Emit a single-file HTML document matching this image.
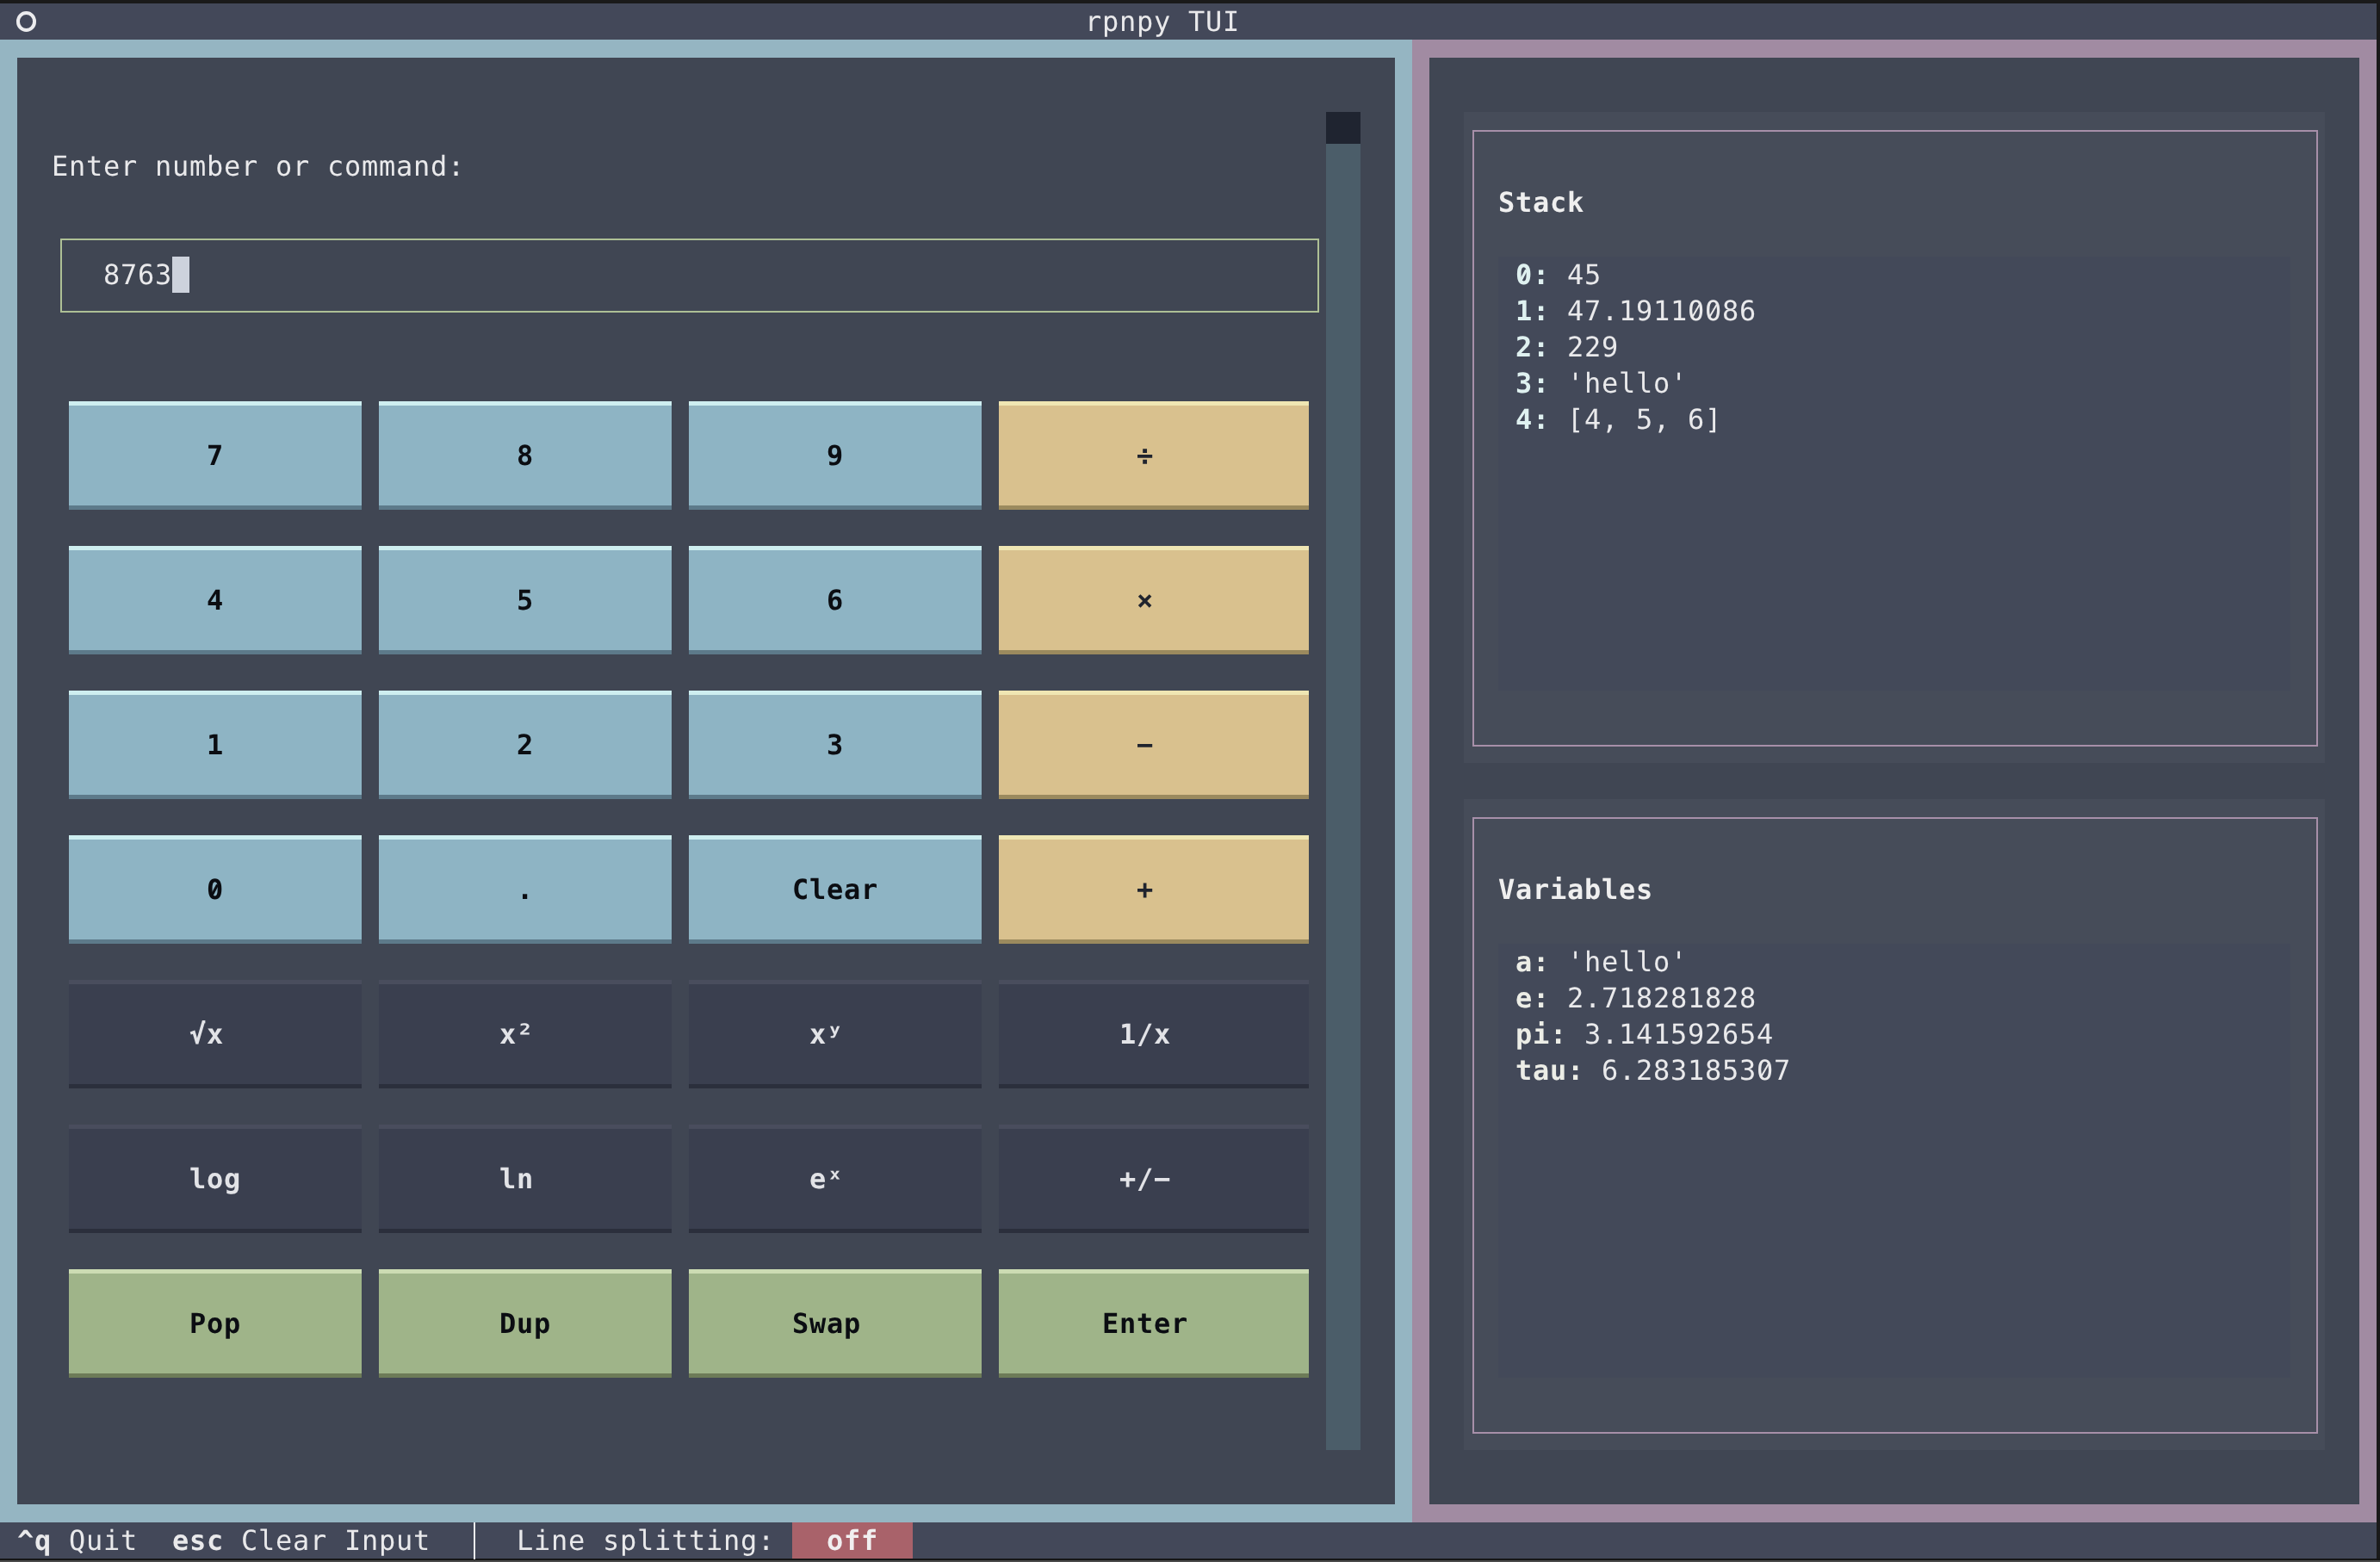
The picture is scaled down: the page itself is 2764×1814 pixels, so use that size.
<!DOCTYPE html>
<html><head><meta charset="utf-8"><title>rpnpy TUI</title>
<style>
html,body{margin:0;padding:0;background:#1a1a1a;}
body{position:relative;width:2764px;height:1814px;overflow:hidden;font-family:"DejaVu Sans Mono","Liberation Mono",monospace;font-size:32px;letter-spacing:0.734375px;line-height:42px;color:#e9e9eb;}
.b{position:absolute;}
#txt{position:absolute;left:0;top:0;width:2764px;height:1814px;will-change:transform;}
.t{position:absolute;transform:skewX(0.03deg);white-space:pre;height:42px;line-height:42px;}
.bd{font-weight:bold;}
</style></head><body>
<div class="b" style="left:0px;top:4px;width:2760px;height:42px;background:#434859;"></div>
<div class="b" style="left:18.9px;top:13px;width:23.05px;height:23.8px;border:solid #ececee;border-width:4.5px 4px;border-radius:50%;box-sizing:border-box"></div>
<div class="b" style="left:0px;top:46px;width:1640px;height:1722px;background:#95b5c2;"></div>
<div class="b" style="left:20px;top:67px;width:1600px;height:1680px;background:#404653;"></div>
<div class="b" style="left:1640px;top:46px;width:1120px;height:1722px;background:#a18ba2;"></div>
<div class="b" style="left:1660px;top:67px;width:1080px;height:1680px;background:#404653;"></div>
<div class="b" style="left:70px;top:277px;width:1462px;height:2px;background:#aec095;"></div>
<div class="b" style="left:70px;top:361px;width:1462px;height:2px;background:#aec095;"></div>
<div class="b" style="left:70px;top:277px;width:2px;height:86px;background:#aec095;"></div>
<div class="b" style="left:1530px;top:277px;width:2px;height:86px;background:#aec095;"></div>
<div class="b" style="left:200px;top:298px;width:20px;height:42px;background:#cdd2dc;"></div>
<div class="b" style="left:1540px;top:130px;width:40px;height:1554px;background:#4b5d69;"></div>
<div class="b" style="left:1540px;top:130px;width:40px;height:36.75px;background:#1f2430;"></div>
<div class="b" style="left:80px;top:466px;width:340px;height:126px;background:#8eb4c4;"></div>
<div class="b" style="left:80px;top:466px;width:340px;height:5px;background:#ceeef0;"></div>
<div class="b" style="left:80px;top:587px;width:340px;height:5px;background:#5d7a8a;"></div>
<div class="b" style="left:440px;top:466px;width:340px;height:126px;background:#8eb4c4;"></div>
<div class="b" style="left:440px;top:466px;width:340px;height:5px;background:#ceeef0;"></div>
<div class="b" style="left:440px;top:587px;width:340px;height:5px;background:#5d7a8a;"></div>
<div class="b" style="left:800px;top:466px;width:340px;height:126px;background:#8eb4c4;"></div>
<div class="b" style="left:800px;top:466px;width:340px;height:5px;background:#ceeef0;"></div>
<div class="b" style="left:800px;top:587px;width:340px;height:5px;background:#5d7a8a;"></div>
<div class="b" style="left:1160px;top:466px;width:360px;height:126px;background:#d9c18e;"></div>
<div class="b" style="left:1160px;top:466px;width:360px;height:5px;background:#efe6b3;"></div>
<div class="b" style="left:1160px;top:587px;width:360px;height:5px;background:#9b8a5e;"></div>
<div class="b" style="left:80px;top:634px;width:340px;height:126px;background:#8eb4c4;"></div>
<div class="b" style="left:80px;top:634px;width:340px;height:5px;background:#ceeef0;"></div>
<div class="b" style="left:80px;top:755px;width:340px;height:5px;background:#5d7a8a;"></div>
<div class="b" style="left:440px;top:634px;width:340px;height:126px;background:#8eb4c4;"></div>
<div class="b" style="left:440px;top:634px;width:340px;height:5px;background:#ceeef0;"></div>
<div class="b" style="left:440px;top:755px;width:340px;height:5px;background:#5d7a8a;"></div>
<div class="b" style="left:800px;top:634px;width:340px;height:126px;background:#8eb4c4;"></div>
<div class="b" style="left:800px;top:634px;width:340px;height:5px;background:#ceeef0;"></div>
<div class="b" style="left:800px;top:755px;width:340px;height:5px;background:#5d7a8a;"></div>
<div class="b" style="left:1160px;top:634px;width:360px;height:126px;background:#d9c18e;"></div>
<div class="b" style="left:1160px;top:634px;width:360px;height:5px;background:#efe6b3;"></div>
<div class="b" style="left:1160px;top:755px;width:360px;height:5px;background:#9b8a5e;"></div>
<div class="b" style="left:80px;top:802px;width:340px;height:126px;background:#8eb4c4;"></div>
<div class="b" style="left:80px;top:802px;width:340px;height:5px;background:#ceeef0;"></div>
<div class="b" style="left:80px;top:923px;width:340px;height:5px;background:#5d7a8a;"></div>
<div class="b" style="left:440px;top:802px;width:340px;height:126px;background:#8eb4c4;"></div>
<div class="b" style="left:440px;top:802px;width:340px;height:5px;background:#ceeef0;"></div>
<div class="b" style="left:440px;top:923px;width:340px;height:5px;background:#5d7a8a;"></div>
<div class="b" style="left:800px;top:802px;width:340px;height:126px;background:#8eb4c4;"></div>
<div class="b" style="left:800px;top:802px;width:340px;height:5px;background:#ceeef0;"></div>
<div class="b" style="left:800px;top:923px;width:340px;height:5px;background:#5d7a8a;"></div>
<div class="b" style="left:1160px;top:802px;width:360px;height:126px;background:#d9c18e;"></div>
<div class="b" style="left:1160px;top:802px;width:360px;height:5px;background:#efe6b3;"></div>
<div class="b" style="left:1160px;top:923px;width:360px;height:5px;background:#9b8a5e;"></div>
<div class="b" style="left:80px;top:970px;width:340px;height:126px;background:#8eb4c4;"></div>
<div class="b" style="left:80px;top:970px;width:340px;height:5px;background:#ceeef0;"></div>
<div class="b" style="left:80px;top:1091px;width:340px;height:5px;background:#5d7a8a;"></div>
<div class="b" style="left:440px;top:970px;width:340px;height:126px;background:#8eb4c4;"></div>
<div class="b" style="left:440px;top:970px;width:340px;height:5px;background:#ceeef0;"></div>
<div class="b" style="left:440px;top:1091px;width:340px;height:5px;background:#5d7a8a;"></div>
<div class="b" style="left:800px;top:970px;width:340px;height:126px;background:#8eb4c4;"></div>
<div class="b" style="left:800px;top:970px;width:340px;height:5px;background:#ceeef0;"></div>
<div class="b" style="left:800px;top:1091px;width:340px;height:5px;background:#5d7a8a;"></div>
<div class="b" style="left:1160px;top:970px;width:360px;height:126px;background:#d9c18e;"></div>
<div class="b" style="left:1160px;top:970px;width:360px;height:5px;background:#efe6b3;"></div>
<div class="b" style="left:1160px;top:1091px;width:360px;height:5px;background:#9b8a5e;"></div>
<div class="b" style="left:80px;top:1138px;width:340px;height:126px;background:#3a3f4f;"></div>
<div class="b" style="left:80px;top:1138px;width:340px;height:5px;background:#494d5d;"></div>
<div class="b" style="left:80px;top:1259px;width:340px;height:5px;background:#2b2f3c;"></div>
<div class="b" style="left:440px;top:1138px;width:340px;height:126px;background:#3a3f4f;"></div>
<div class="b" style="left:440px;top:1138px;width:340px;height:5px;background:#494d5d;"></div>
<div class="b" style="left:440px;top:1259px;width:340px;height:5px;background:#2b2f3c;"></div>
<div class="b" style="left:800px;top:1138px;width:340px;height:126px;background:#3a3f4f;"></div>
<div class="b" style="left:800px;top:1138px;width:340px;height:5px;background:#494d5d;"></div>
<div class="b" style="left:800px;top:1259px;width:340px;height:5px;background:#2b2f3c;"></div>
<div class="b" style="left:1160px;top:1138px;width:360px;height:126px;background:#3a3f4f;"></div>
<div class="b" style="left:1160px;top:1138px;width:360px;height:5px;background:#494d5d;"></div>
<div class="b" style="left:1160px;top:1259px;width:360px;height:5px;background:#2b2f3c;"></div>
<div class="b" style="left:80px;top:1306px;width:340px;height:126px;background:#3a3f4f;"></div>
<div class="b" style="left:80px;top:1306px;width:340px;height:5px;background:#494d5d;"></div>
<div class="b" style="left:80px;top:1427px;width:340px;height:5px;background:#2b2f3c;"></div>
<div class="b" style="left:440px;top:1306px;width:340px;height:126px;background:#3a3f4f;"></div>
<div class="b" style="left:440px;top:1306px;width:340px;height:5px;background:#494d5d;"></div>
<div class="b" style="left:440px;top:1427px;width:340px;height:5px;background:#2b2f3c;"></div>
<div class="b" style="left:800px;top:1306px;width:340px;height:126px;background:#3a3f4f;"></div>
<div class="b" style="left:800px;top:1306px;width:340px;height:5px;background:#494d5d;"></div>
<div class="b" style="left:800px;top:1427px;width:340px;height:5px;background:#2b2f3c;"></div>
<div class="b" style="left:1160px;top:1306px;width:360px;height:126px;background:#3a3f4f;"></div>
<div class="b" style="left:1160px;top:1306px;width:360px;height:5px;background:#494d5d;"></div>
<div class="b" style="left:1160px;top:1427px;width:360px;height:5px;background:#2b2f3c;"></div>
<div class="b" style="left:80px;top:1474px;width:340px;height:126px;background:#9fb489;"></div>
<div class="b" style="left:80px;top:1474px;width:340px;height:5px;background:#ccdcb3;"></div>
<div class="b" style="left:80px;top:1595px;width:340px;height:5px;background:#6d7b58;"></div>
<div class="b" style="left:440px;top:1474px;width:340px;height:126px;background:#9fb489;"></div>
<div class="b" style="left:440px;top:1474px;width:340px;height:5px;background:#ccdcb3;"></div>
<div class="b" style="left:440px;top:1595px;width:340px;height:5px;background:#6d7b58;"></div>
<div class="b" style="left:800px;top:1474px;width:340px;height:126px;background:#9fb489;"></div>
<div class="b" style="left:800px;top:1474px;width:340px;height:5px;background:#ccdcb3;"></div>
<div class="b" style="left:800px;top:1595px;width:340px;height:5px;background:#6d7b58;"></div>
<div class="b" style="left:1160px;top:1474px;width:360px;height:126px;background:#9fb489;"></div>
<div class="b" style="left:1160px;top:1474px;width:360px;height:5px;background:#ccdcb3;"></div>
<div class="b" style="left:1160px;top:1595px;width:360px;height:5px;background:#6d7b58;"></div>
<div class="b" style="left:1700px;top:130px;width:1000px;height:756px;background:#464c59;"></div>
<div class="b" style="left:1710px;top:151px;width:982px;height:2px;background:#a78fa9;"></div>
<div class="b" style="left:1710px;top:865px;width:982px;height:2px;background:#a78fa9;"></div>
<div class="b" style="left:1710px;top:151px;width:2px;height:716px;background:#a78fa9;"></div>
<div class="b" style="left:2690px;top:151px;width:2px;height:716px;background:#a78fa9;"></div>
<div class="b" style="left:1740px;top:298px;width:920px;height:504px;background:#434959;"></div>
<div class="b" style="left:1700px;top:928px;width:1000px;height:756px;background:#464c59;"></div>
<div class="b" style="left:1710px;top:949px;width:982px;height:2px;background:#a78fa9;"></div>
<div class="b" style="left:1710px;top:1663px;width:982px;height:2px;background:#a78fa9;"></div>
<div class="b" style="left:1710px;top:949px;width:2px;height:716px;background:#a78fa9;"></div>
<div class="b" style="left:2690px;top:949px;width:2px;height:716px;background:#a78fa9;"></div>
<div class="b" style="left:1740px;top:1096px;width:920px;height:504px;background:#434959;"></div>
<div class="b" style="left:0px;top:1810px;width:2764px;height:2px;background:#161616;"></div>
<div class="b" style="left:0px;top:1812px;width:2764px;height:2px;background:#4a4a4a;"></div>
<div class="b" style="left:0px;top:1768px;width:2760px;height:42px;background:#434859;"></div>
<div class="b" style="left:550px;top:1768px;width:2px;height:43px;background:#edecee;"></div>
<div class="b" style="left:920px;top:1768px;width:140px;height:42px;background:#a9626a;"></div>
<div id="txt">
<span class="t" style="left:1260px;top:4.3px;color:#e9e9eb;">rpnpy TUI</span>
<span class="t" style="left:60px;top:172.3px;">Enter number or command:</span>
<span class="t" style="left:120px;top:298.3px;">8763</span>
<span class="t bd" style="left:240px;top:508.3px;color:#0b0d12;">7</span>
<span class="t bd" style="left:600px;top:508.3px;color:#0b0d12;">8</span>
<span class="t bd" style="left:960px;top:508.3px;color:#0b0d12;">9</span>
<span class="t bd" style="left:1320px;top:508.3px;color:#20242e;">÷</span>
<span class="t bd" style="left:240px;top:676.3px;color:#0b0d12;">4</span>
<span class="t bd" style="left:600px;top:676.3px;color:#0b0d12;">5</span>
<span class="t bd" style="left:960px;top:676.3px;color:#0b0d12;">6</span>
<span class="t bd" style="left:1320px;top:676.3px;color:#20242e;">×</span>
<span class="t bd" style="left:240px;top:844.3px;color:#0b0d12;">1</span>
<span class="t bd" style="left:600px;top:844.3px;color:#0b0d12;">2</span>
<span class="t bd" style="left:960px;top:844.3px;color:#0b0d12;">3</span>
<span class="t bd" style="left:1320px;top:844.3px;color:#20242e;">−</span>
<span class="t bd" style="left:240px;top:1012.3px;color:#0b0d12;">0</span>
<span class="t bd" style="left:600px;top:1012.3px;color:#0b0d12;">.</span>
<span class="t bd" style="left:920px;top:1012.3px;color:#0b0d12;">Clear</span>
<span class="t bd" style="left:1320px;top:1012.3px;color:#20242e;">+</span>
<span class="t bd" style="left:220px;top:1180.3px;color:#e2e3e7;">√x</span>
<span class="t bd" style="left:580px;top:1180.3px;color:#e2e3e7;">x²</span>
<span class="t bd" style="left:940px;top:1180.3px;color:#e2e3e7;">xʸ</span>
<span class="t bd" style="left:1300px;top:1180.3px;color:#e2e3e7;">1/x</span>
<span class="t bd" style="left:220px;top:1348.3px;color:#e2e3e7;">log</span>
<span class="t bd" style="left:580px;top:1348.3px;color:#e2e3e7;">ln</span>
<span class="t bd" style="left:940px;top:1348.3px;color:#e2e3e7;">eˣ</span>
<span class="t bd" style="left:1300px;top:1348.3px;color:#e2e3e7;">+/−</span>
<span class="t bd" style="left:220px;top:1516.3px;color:#0b0d12;">Pop</span>
<span class="t bd" style="left:580px;top:1516.3px;color:#0b0d12;">Dup</span>
<span class="t bd" style="left:920px;top:1516.3px;color:#0b0d12;">Swap</span>
<span class="t bd" style="left:1280px;top:1516.3px;color:#0b0d12;">Enter</span>
<span class="t bd" style="left:1740px;top:214.3px;color:#efefef;">Stack</span>
<span class="t bd" style="left:1760px;top:298.3px;color:#dff1f0;">0:</span>
<span class="t" style="left:1820px;top:298.3px;color:#e9e9eb;">45</span>
<span class="t bd" style="left:1760px;top:340.3px;color:#dff1f0;">1:</span>
<span class="t" style="left:1820px;top:340.3px;color:#e9e9eb;">47.19110086</span>
<span class="t bd" style="left:1760px;top:382.3px;color:#dff1f0;">2:</span>
<span class="t" style="left:1820px;top:382.3px;color:#e9e9eb;">229</span>
<span class="t bd" style="left:1760px;top:424.3px;color:#dff1f0;">3:</span>
<span class="t" style="left:1820px;top:424.3px;color:#e9e9eb;">'hello'</span>
<span class="t bd" style="left:1760px;top:466.3px;color:#dff1f0;">4:</span>
<span class="t" style="left:1820px;top:466.3px;color:#e9e9eb;">[4, 5, 6]</span>
<span class="t bd" style="left:1740px;top:1012.3px;color:#efefef;">Variables</span>
<span class="t bd" style="left:1760px;top:1096.3px;color:#ecede6;">a:</span>
<span class="t" style="left:1820px;top:1096.3px;color:#e9e9eb;">'hello'</span>
<span class="t bd" style="left:1760px;top:1138.3px;color:#ecede6;">e:</span>
<span class="t" style="left:1820px;top:1138.3px;color:#e9e9eb;">2.718281828</span>
<span class="t bd" style="left:1760px;top:1180.3px;color:#ecede6;">pi:</span>
<span class="t" style="left:1840px;top:1180.3px;color:#e9e9eb;">3.141592654</span>
<span class="t bd" style="left:1760px;top:1222.3px;color:#ecede6;">tau:</span>
<span class="t" style="left:1860px;top:1222.3px;color:#e9e9eb;">6.283185307</span>
<span class="t bd" style="left:20px;top:1768.3px;color:#e9e9eb;">^q</span>
<span class="t" style="left:80px;top:1768.3px;color:#e9e9eb;">Quit</span>
<span class="t bd" style="left:200px;top:1768.3px;color:#e9e9eb;">esc</span>
<span class="t" style="left:280px;top:1768.3px;color:#e9e9eb;">Clear Input</span>
<span class="t" style="left:600px;top:1768.3px;color:#e9e9eb;">Line splitting:</span>
<span class="t bd" style="left:960px;top:1768.3px;color:#f1eff0;">off</span>
</div>
<div class="b" style="left:1767.03px;top:316.10px;width:5.2px;height:5.2px;border-radius:50%;background:#434959"></div>
<div class="b" style="left:1763.18px;top:317.55px;width:12.6px;height:2.7px;background:#dff1f0;transform:rotate(-62.5deg)"></div>
<div class="b" style="left:1966.63px;top:357.70px;width:6.0px;height:6.0px;border-radius:50%;background:#434959"></div>
<div class="b" style="left:1960.98px;top:359.85px;width:17.0px;height:2.1px;background:#e9e9eb;transform:rotate(-60deg)"></div>
<div class="b" style="left:1986.63px;top:357.70px;width:6.0px;height:6.0px;border-radius:50%;background:#434959"></div>
<div class="b" style="left:1980.98px;top:359.85px;width:17.0px;height:2.1px;background:#e9e9eb;transform:rotate(-60deg)"></div>
<div class="b" style="left:2046.63px;top:1239.70px;width:6.0px;height:6.0px;border-radius:50%;background:#434959"></div>
<div class="b" style="left:2040.98px;top:1241.85px;width:17.0px;height:2.1px;background:#e9e9eb;transform:rotate(-60deg)"></div>
<div class="b" style="left:247.03px;top:1030.10px;width:5.2px;height:5.2px;border-radius:50%;background:#8eb4c4"></div>
<div class="b" style="left:243.18px;top:1031.55px;width:12.6px;height:2.7px;background:#0b0d12;transform:rotate(-62.5deg)"></div>
</body></html>
